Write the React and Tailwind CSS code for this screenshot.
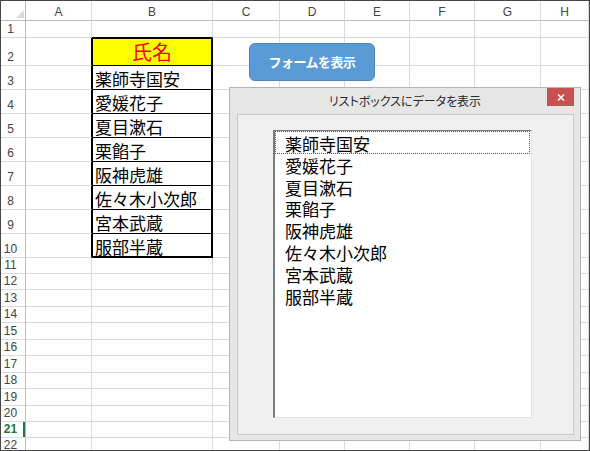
import React from "react";

const COLS = ["A", "B", "C", "D", "E", "F", "G", "H"];
const NAMES = ["薬師寺国安", "愛媛花子", "夏目漱石", "栗餡子", "阪神虎雄", "佐々木小次郎", "宮本武蔵", "服部半蔵"];
const ROWS = Array.from({ length: 22 }, (_, i) => i + 1);

const JP = "font-['Noto_Sans_CJK_JP',sans-serif]";

function cellClass(r, c) {
  let cls = "border-r border-b border-[#dadada] flex items-end overflow-visible";
  if (c === "A" && r >= 2 && r <= 10) cls += " border-r-black";
  if (c === "B" && r === 1) cls += " border-b-black";
  if (c === "B" && r >= 2 && r <= 10) {
    cls += " border-r-black border-b-black";
    if (r === 2) cls += " bg-[#ffff00] justify-center shadow-[inset_1px_1px_0_#000,inset_-1px_0_0_#000]";
    else if (r === 10) cls += " shadow-[inset_1px_-1px_0_#000,inset_-1px_0_0_#000]";
    else cls += " shadow-[inset_1px_0_0_#000,inset_-1px_0_0_#000]";
  }
  return cls;
}

function Cell({ r, c }) {
  let content = null;
  if (c === "B" && r === 2) {
    content = (
      <span className={`${JP} text-[20px] leading-none text-[#ff0000] pb-[3px]`}>氏名</span>
    );
  } else if (c === "B" && r >= 3 && r <= 10) {
    content = (
      <span className={`${JP} text-[17px] leading-none text-black pb-[2px] pl-[3px] whitespace-nowrap`}>
        {NAMES[r - 3]}
      </span>
    );
  }
  return <div className={cellClass(r, c)}>{content}</div>;
}

export default function App() {
  return (
    <div className="relative w-[590px] h-[451px] overflow-hidden border border-[#474747] bg-white">
      <div className="grid h-full grid-cols-[25px_66px_121px_67px_65px_65px_65px_66px_1fr] grid-rows-[20px_17px_28px_repeat(8,24px)_16px_16px_17px_16px_17px_16px_17px_16px_17px_16px_16px_1fr]">
        {/* corner */}
        <div className="border-r border-b border-[#bcbcbc] flex items-end justify-end pr-[1px] pb-[2px]">
          <svg width="8" height="8" viewBox="0 0 8 8">
            <polygon points="8,0 8,8 0,8" fill="#dcdcdc" />
          </svg>
        </div>
        {COLS.map((c) => (
          <div
            key={c}
            className="border-r border-b border-r-[#dadada] border-b-[#bcbcbc] flex items-center justify-center pt-[2px] font-['Liberation_Sans',sans-serif] text-[12px] text-[#444]"
          >
            {c}
          </div>
        ))}
        {ROWS.map((r) => (
          <React.Fragment key={r}>
            <div
              className={
                "border-r border-b border-r-[#bcbcbc] border-b-[#dadada] flex items-end justify-center pr-[5px] font-['Liberation_Sans',sans-serif] text-[12px] leading-[15px] " +
                (r === 21
                  ? "text-[#217346] font-bold shadow-[inset_-2px_0_0_#217346]"
                  : "text-[#444]")
              }
            >
              {r}
            </div>
            {COLS.map((c) => (
              <Cell key={c} r={r} c={c} />
            ))}
          </React.Fragment>
        ))}
      </div>

      {/* button */}
      <div
        className={`absolute left-[248px] top-[42px] w-[126px] h-[38px] rounded-[6px] bg-[#5b9bd5] border border-[#4d86be] flex items-center justify-center text-white font-bold text-[13px] tracking-[-0.5px] ${JP}`}
      >
        フォームを表示
      </div>

      {/* dialog */}
      <div className="absolute left-[228px] top-[86px] w-[352px] h-[354px] border border-[#b4b4b4] bg-[#e6e6e6] flex flex-col">
        <div className="relative h-[26px] flex items-center justify-center">
          <span className={`${JP} text-[12px] text-[#2b2b2b] [font-feature-settings:'palt']`}>
            リストボックスにデータを表示
          </span>
          <div className="absolute right-[6px] top-0 w-[27px] h-[18px] bg-[#c75050] flex items-center justify-center">
            <svg width="8" height="7" viewBox="0 0 8 7">
              <path d="M1 0.5 L7 6.5 M7 0.5 L1 6.5" stroke="#fff" strokeWidth="1.6" />
            </svg>
          </div>
        </div>
        <div className="flex-1 ml-[7px] mr-[6px] mb-[5px] border border-[#c9c9c9] bg-[#f0f0f0] pl-[35px] pt-[15px]">
          <div className="w-[259px] h-[288px] bg-white border-l-2 border-t border-r border-b border-l-[#7a7a7a] border-t-[#7a7a7a] border-r-[#e3e3e3] border-b-[#e3e3e3]">
            <div className="relative pt-[2px] pl-[10px]">
              <div className="absolute left-0 right-[1px] top-0 h-[23px] border border-dotted border-[#555]" />
              {NAMES.map((n) => (
                <div key={n} className={`${JP} text-[17px] leading-[21.8px] text-black whitespace-nowrap`}>
                  {n}
                </div>
              ))}
            </div>
          </div>
        </div>
      </div>
    </div>
  );
}
